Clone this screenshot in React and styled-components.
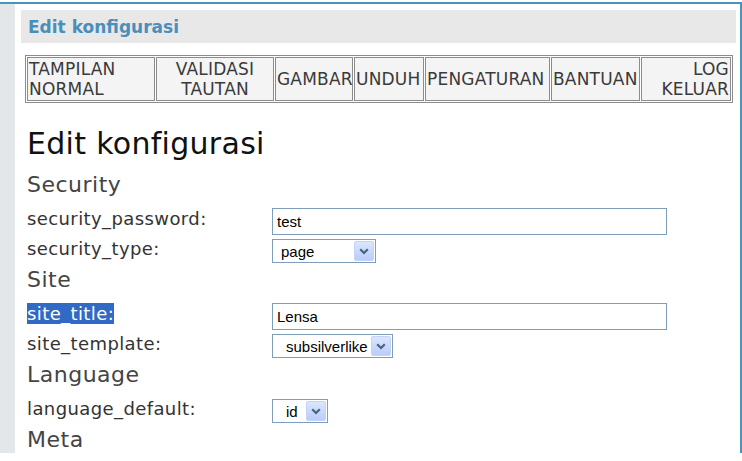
import React from "react";
import styled, { createGlobalStyle } from "styled-components";

const GlobalStyle = createGlobalStyle`
  body {
    margin: 0;
    background: #fff;
    font-family: "DejaVu Sans", Verdana, sans-serif;
  }
`;

const NAV = [
  { label: ["TAMPILAN", "NORMAL"], align: "left" },
  { label: ["VALIDASI", "TAUTAN"], align: "center" },
  { label: ["GAMBAR"], align: "left" },
  { label: ["UNDUH"], align: "left" },
  { label: ["PENGATURAN"], align: "left" },
  { label: ["BANTUAN"], align: "left" },
  { label: ["LOG", "KELUAR"], align: "right" },
];

const SECTIONS = [
  {
    title: "Security",
    rows: [
      { name: "security_password", type: "text", value: "test" },
      { name: "security_type", type: "select", value: "page", width: 104, indent: 8 },
    ],
  },
  {
    title: "Site",
    rows: [
      { name: "site_title", type: "text", value: "Lensa", selected: true },
      { name: "site_template", type: "select", value: "subsilverlike", width: 121, indent: 13 },
    ],
  },
  {
    title: "Language",
    rows: [{ name: "language_default", type: "select", value: "id", width: 56, indent: 13 }],
  },
  { title: "Meta", rows: [] },
];

const Chevron = () => (
  <svg width="10" height="7" viewBox="0 0 10 7">
    <path d="M1.2 1.2 L5 5 L8.8 1.2" fill="none" stroke="#4d6185" strokeWidth="2.2" />
  </svg>
);

const App = () => (
  <>
    <GlobalStyle />
    <Frame>
      <SideStrip />
      <Main>
        <HeaderBar>
          <HeaderTitle>Edit konfigurasi</HeaderTitle>
        </HeaderBar>
        <NavBar>
          {NAV.map((item) => (
            <NavCell key={item.label.join(" ")} $align={item.align}>
              {item.label.map((line) => (
                <span key={line}>{line}</span>
              ))}
            </NavCell>
          ))}
        </NavBar>
        <Content>
          <PageTitle>Edit konfigurasi</PageTitle>
          {SECTIONS.map((section) => (
            <Section key={section.title}>
              <SectionTitle>{section.title}</SectionTitle>
              {section.rows.map((row) => (
                <Row key={row.name}>
                  <Label>
                    <LabelText $selected={row.selected}>{row.name}:</LabelText>
                  </Label>
                  {row.type === "text" ? (
                    <TextInput defaultValue={row.value} />
                  ) : (
                    <SelectBox $width={row.width}>
                      <SelectValue $indent={row.indent}>{row.value}</SelectValue>
                      <SelectArrow>
                        <Chevron />
                      </SelectArrow>
                    </SelectBox>
                  )}
                </Row>
              ))}
            </Section>
          ))}
        </Content>
      </Main>
    </Frame>
  </>
);

const Frame = styled.div`
  box-sizing: border-box;
  margin-top: 2px;
  height: 451px;
  display: flex;
  border-top: 2px solid #4a94bb;
  border-right: 2px solid #4a94bb;
  overflow: hidden;
`;

const SideStrip = styled.div`
  flex: 0 0 15px;
  background: #e4e7ea;
`;

const Main = styled.div`
  flex: 1;
  min-width: 0;
  padding: 6px 4px 0 6px;
`;

const HeaderBar = styled.div`
  height: 33px;
  display: flex;
  align-items: center;
  padding-left: 7px;
  background: #e8e8e8;
`;

const HeaderTitle = styled.div`
  font-size: 17px;
  font-weight: bold;
  color: #4a8fba;
`;

const NavBar = styled.div`
  margin: 12px 3px 0 4px;
  display: grid;
  grid-template-columns: 128px 118px 78px 70px 125px 89px 1fr;
  gap: 1px;
  padding: 1px;
  border: 1px solid #8c8c8c;
  background: #fff;
`;

const NavCell = styled.div`
  display: flex;
  flex-direction: column;
  justify-content: center;
  align-items: ${(p) =>
    p.$align === "center" ? "center" : p.$align === "right" ? "flex-end" : "flex-start"};
  height: 40px;
  padding: 1px 1px;
  border: 1px solid #8c8c8c;
  background: #f4f4f4;
  font-size: 17px;
  line-height: 20px;
  letter-spacing: 0.2px;
  color: #3a3a3a;
  white-space: nowrap;
`;

const Content = styled.div`
  padding-left: 6px;
`;

const PageTitle = styled.h1`
  margin: 24px 0 0;
  font-size: 30px;
  line-height: 34px;
  letter-spacing: 0.3px;
  font-weight: normal;
  color: #111;
`;

const Section = styled.div`
  &:first-of-type {
    margin-top: 10px;
  }
`;

const SectionTitle = styled.h2`
  margin: 0 0 7px;
  font-size: 22px;
  line-height: 28px;
  letter-spacing: 0.5px;
  font-weight: normal;
  color: #444;
`;

const Row = styled.div`
  display: grid;
  grid-template-columns: 245px auto;
  justify-content: start;
  align-items: center;
  height: 30px;
`;

const Label = styled.div`
  align-self: start;
  padding-top: 2px;
  font-size: 18px;
  line-height: 22px;
  letter-spacing: 0.4px;
  color: #333;
`;

const LabelText = styled.span`
  background: ${(p) => (p.$selected ? "#316ac5" : "transparent")};
  color: ${(p) => (p.$selected ? "#fff" : "inherit")};
`;

const TextInput = styled.input`
  box-sizing: border-box;
  width: 395px;
  height: 27px;
  margin: 0;
  padding: 0 4px;
  border: 1px solid #7f9db9;
  font-family: "Liberation Sans", Arial, sans-serif;
  font-size: 15px;
  color: #000;
  outline: none;
`;

const SelectBox = styled.div`
  box-sizing: border-box;
  display: flex;
  align-items: stretch;
  width: ${(p) => p.$width}px;
  height: 24px;
  border: 1px solid #7f9db9;
  background: #fff;
  font-family: "Liberation Sans", Arial, sans-serif;
  font-size: 15px;
  color: #000;
`;

const SelectValue = styled.div`
  flex: 1;
  display: flex;
  align-items: center;
  padding-left: ${(p) => p.$indent}px;
  white-space: nowrap;
  overflow: hidden;
`;

const SelectArrow = styled.div`
  flex: 0 0 18px;
  margin: 1px;
  display: flex;
  align-items: center;
  justify-content: center;
  border: 1px solid #c3d3fd;
  border-radius: 2px;
  background: linear-gradient(#dbe6fd, #b9cdf7);
`;

export default App;
